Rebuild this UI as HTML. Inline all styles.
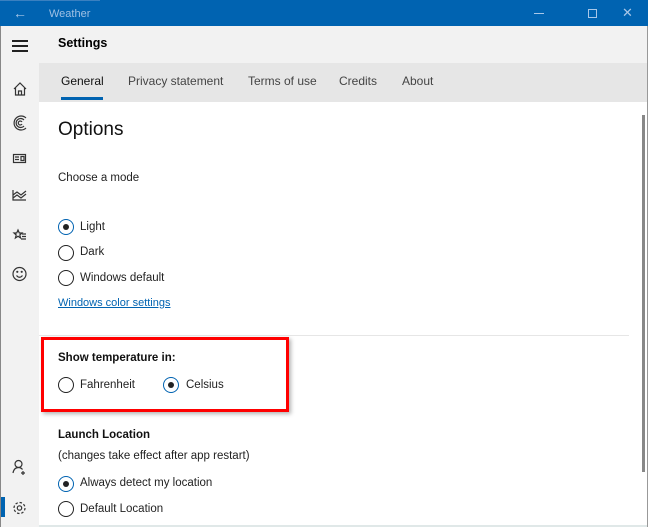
<!DOCTYPE html>
<html><head><style>
*{margin:0;padding:0;box-sizing:border-box}
body{width:648px;height:527px;overflow:hidden;background:#fff;font-family:"Liberation Sans",sans-serif;position:relative;color:#000}
.a{position:absolute}
.t{font-size:11.5px;color:#222}
.tab{position:absolute;top:74px;font-size:12px;color:#444}
.r{position:absolute;width:16px;height:16px;border:1.5px solid #222;border-radius:50%}
.r.on{border-color:#0063b1}
.r.on:after{content:"";position:absolute;left:3.5px;top:3.5px;width:6px;height:6px;border-radius:50%;background:#222}
</style></head><body>
<div class="a" style="left:0;top:0;width:648px;height:26px;background:#0063b1"></div>
<div class="a" style="left:0;top:0;width:100px;height:1px;background:#3a80c0"></div>
<div class="a" style="left:13px;top:5px;color:#a9c7e8;font-size:14px">&#8592;</div>
<div class="a" style="left:49px;top:8px;color:#9fc0e4;font-size:11px">Weather</div>
<div class="a" style="left:534px;top:13px;width:10px;height:1px;background:#a9c7e8"></div>
<div class="a" style="left:588px;top:9px;width:9px;height:9px;border:1px solid #a9c7e8"></div>
<div class="a" style="left:622px;top:5px;color:#a9c7e8;font-size:13px">✕</div>
<div class="a" style="left:0;top:26px;width:648px;height:37px;background:#f2f2f2"></div>
<div class="a" style="left:0;top:26px;width:39px;height:501px;background:#f2f2f2"></div>
<div class="a" style="left:0;top:26px;width:1px;height:501px;background:#888"></div>
<div class="a" style="left:647px;top:26px;width:1px;height:501px;background:#999"></div>
<div class="a" style="left:12px;top:40px;width:16px;height:2px;background:#222;box-shadow:0 5px 0 #222,0 10px 0 #222"></div>
<div class="a" style="left:58px;top:36px;font-size:12.5px;font-weight:bold">Settings</div>
<div class="a" style="left:39px;top:63px;width:608px;height:39px;background:#e6e6e6"></div>
<div class="tab" style="left:61px;color:#111">General</div>
<div class="a" style="left:61px;top:97px;width:42px;height:3px;background:#0063b1"></div>
<div class="tab" style="left:128px">Privacy statement</div>
<div class="tab" style="left:248px">Terms of use</div>
<div class="tab" style="left:339px">Credits</div>
<div class="tab" style="left:402px">About</div>
<svg class="a" style="left:0;top:70px" width="39" height="460" fill="none" stroke="#333" stroke-width="1.2">
<path d="M14 19 L20 13 L26 19 M15.5 17.5 V25 H24.5 V17.5 M18.5 25 V21 H21.5 V25"/>
<path d="M26 48 A7 7 0 1 0 26 58 M24 50 A4.5 4.5 0 1 0 24 56 M22 52 A2 2 0 1 0 22 54"/>
<rect x="13.5" y="84.5" width="12" height="8"/><path d="M15 87 H19 M15 89.5 H19 M21 86.5 H24 V90.5 H21Z"/>
<path d="M13 120 V130 H26 M13 125 L17 122 L21 125 L26 121 M13 128 L17 125 L21 128 L26 124"/>
<path d="M18 160 L19.3 163 L22 163 L19.8 165 L20.6 168 L18 166.2 L15.4 168 L16.2 165 L14 163 L16.7 163Z M22 164 H26 M22 166.5 H26 M21 169 H26"/>
<circle cx="19.5" cy="204" r="6.5"/><path d="M16.5 205.5 Q19.5 209 22.5 205.5"/><circle cx="17.3" cy="201.8" r=".5" fill="#333"/><circle cx="21.7" cy="201.8" r=".5" fill="#333"/>
<circle cx="18.5" cy="394" r="3.5"/><path d="M13 403 Q14 397.5 18.5 397.5 Q21 397.5 22.5 399.5 M23 401 V405 M21 403 H25"/>
<circle cx="19.5" cy="438" r="2.2"/><circle cx="19.5" cy="438" r="5.5" stroke-dasharray="2.5 1.8"/>
</svg>
<div class="a" style="left:1px;top:497px;width:4px;height:20px;background:#0063b1"></div>
<div class="a" style="left:58px;top:119px;font-size:19px;color:#111">Options</div>
<div class="a t" style="left:58px;top:172px">Choose a mode</div>
<div class="r on" style="left:58px;top:219px"></div><div class="a t" style="left:80px;top:221px">Light</div>
<div class="r" style="left:58px;top:245px"></div><div class="a t" style="left:80px;top:246px">Dark</div>
<div class="r" style="left:58px;top:270px"></div><div class="a t" style="left:80px;top:272px">Windows default</div>
<div class="a" style="left:58px;top:297px;font-size:11px;color:#0063b1;text-decoration:underline">Windows color settings</div>
<div class="a" style="left:39px;top:335px;width:590px;height:1px;background:#e6e6e6"></div>
<div class="a" style="left:642px;top:115px;width:3px;height:357px;background:#888"></div>
<div class="a" style="left:41px;top:337px;width:248px;height:75px;border:3px solid #f00;box-shadow:2px 2px 4px rgba(0,0,0,.3)"></div>
<div class="a" style="left:58px;top:352px;font-size:11.5px;font-weight:bold;color:#111">Show temperature in:</div>
<div class="r" style="left:58px;top:377px"></div><div class="a t" style="left:80px;top:379px">Fahrenheit</div>
<div class="r on" style="left:163px;top:377px"></div><div class="a t" style="left:186px;top:379px">Celsius</div>
<div class="a" style="left:58px;top:429px;font-size:11.5px;font-weight:bold;color:#111">Launch Location</div>
<div class="a t" style="left:58px;top:450px">(changes take effect after app restart)</div>
<div class="r on" style="left:58px;top:476px"></div><div class="a t" style="left:80px;top:477px">Always detect my location</div>
<div class="r" style="left:58px;top:501px"></div><div class="a t" style="left:80px;top:503px">Default Location</div>
<div class="a" style="left:39px;top:525px;width:608px;height:2px;background:#e0e8e8"></div>
</body></html>
